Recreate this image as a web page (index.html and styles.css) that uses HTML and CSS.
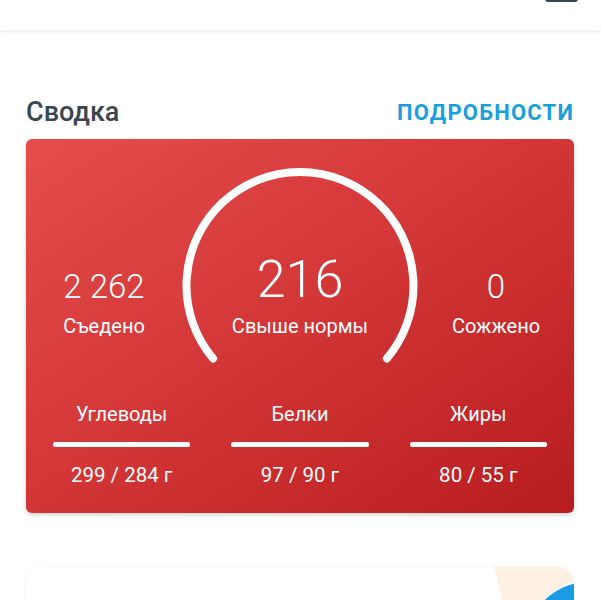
FILE: index.html
```html
<!DOCTYPE html>
<html lang="ru">
<head>
  <meta charset="UTF-8">
  <title>Дневник</title>
  <link rel="stylesheet" href="styles.css">
</head>
<body>
  <div class="topbar">
    <span class="topbar-icon"></span>
  </div>

  <div class="content">
    <div class="section-head">
      <h2>Сводка</h2>
      <a href="#">Подробности</a>
    </div>

    <div class="summary">
      <div class="summary-top">
        <div class="stat">
          <div class="stat-value">2 262</div>
          <div class="stat-label">Съедено</div>
        </div>

        <div class="gauge">
          <svg width="236" height="196" viewBox="0 0 236 196">
            <path d="M 31.05 190.46 A 113.5 113.5 0 1 1 204.95 190.46" fill="none" stroke="#fff" stroke-width="8" stroke-linecap="round"/>
          </svg>
          <div class="gauge-text">
            <div class="gauge-value">216</div>
            <div class="stat-label">Свыше нормы</div>
          </div>
        </div>

        <div class="stat">
          <div class="stat-value">0</div>
          <div class="stat-label">Сожжено</div>
        </div>
      </div>

      <div class="macros">
        <div class="macro">
          <div class="macro-name">Углеводы</div>
          <div class="macro-bar"></div>
          <div class="macro-value">299 / 284 г</div>
        </div>
        <div class="macro">
          <div class="macro-name">Белки</div>
          <div class="macro-bar"></div>
          <div class="macro-value">97 / 90 г</div>
        </div>
        <div class="macro">
          <div class="macro-name">Жиры</div>
          <div class="macro-bar"></div>
          <div class="macro-value">80 / 55 г</div>
        </div>
      </div>
    </div>

    <div class="promo">
      <svg class="promo-art" width="80" height="40" viewBox="0 0 80 40">
        <path d="M0 0 H68 Q80 0 80 12 V40 H10 Z" fill="#fdf0e2"/>
        <circle cx="100" cy="88" r="75" fill="#1a9be3" stroke="#fff" stroke-width="2"/>
      </svg>
    </div>
  </div>
</body>
</html>
```

FILE: styles.css
```css
body {
  margin: 0;
  font-family: Roboto, "Noto Sans", sans-serif;
  background-color: #fff;
  overflow: hidden;
}

.topbar {
  height: 30px;
  background-color: #fff;
  box-shadow: 0 2px 3px rgba(0, 0, 0, 0.07);
  display: flex;
  justify-content: flex-end;
  padding-right: 23px;
}

.topbar-icon {
  width: 33px;
  height: 14px;
  margin-top: -12px;
  background-color: #37474f;
  border-radius: 3px;
}

.content {
  padding: 66px 27px 0 26px;
}

.section-head {
  display: flex;
  justify-content: space-between;
  align-items: center;
  height: 32px;
  margin-bottom: 11px;
}

.section-head h2 {
  margin: 0;
  font-size: 27px;
  line-height: 32px;
  font-weight: 500;
  color: #3a474e;
}

.section-head a {
  font-size: 22px;
  font-weight: 700;
  letter-spacing: 1.2px;
  text-transform: uppercase;
  text-decoration: none;
  color: #1a9fde;
  margin-right: 0;
}

.summary {
  height: 374px;
  box-sizing: border-box;
  padding: 29px 0 0;
  border-radius: 6px;
  background: linear-gradient(to bottom right, #e64d4d, #d23535 50%, #b71c1f);
  box-shadow: 0 2px 4px rgba(0, 0, 0, 0.18);
  color: #fff;
}

.summary-top {
  display: flex;
}

.stat {
  flex: 1;
  padding-top: 102px;
  text-align: center;
}

.stat-value {
  font-size: 33px;
  font-weight: 300;
  line-height: 1;
  margin-bottom: 11px;
}

.stat-label {
  font-size: 20px;
  line-height: 24px;
}

.gauge {
  position: relative;
  width: 236px;
  height: 196px;
}

.gauge svg {
  display: block;
}

.gauge-text {
  position: absolute;
  top: 86px;
  left: 0;
  right: 0;
  text-align: center;
}

.gauge-value {
  font-size: 52px;
  font-weight: 300;
  line-height: 1;
  margin-bottom: 8px;
}

.macros {
  display: flex;
  gap: 41px;
  padding: 38px 27px 0;
}

.macro {
  flex: 1;
  text-align: center;
}

.macro-name {
  font-size: 20px;
  line-height: 24px;
}

.macro-bar {
  height: 5px;
  margin: 16px 0;
  border-radius: 2px;
  background-color: #fff;
}

.macro-value {
  font-size: 20.5px;
  line-height: 24px;
}

.promo {
  position: relative;
  height: 120px;
  margin-top: 54px;
  border-radius: 16px;
  background-color: #fff;
  box-shadow: 0 1px 4px rgba(0, 0, 0, 0.08);
  overflow: hidden;
}

.promo-art {
  position: absolute;
  top: 0;
  right: 0;
}
```
